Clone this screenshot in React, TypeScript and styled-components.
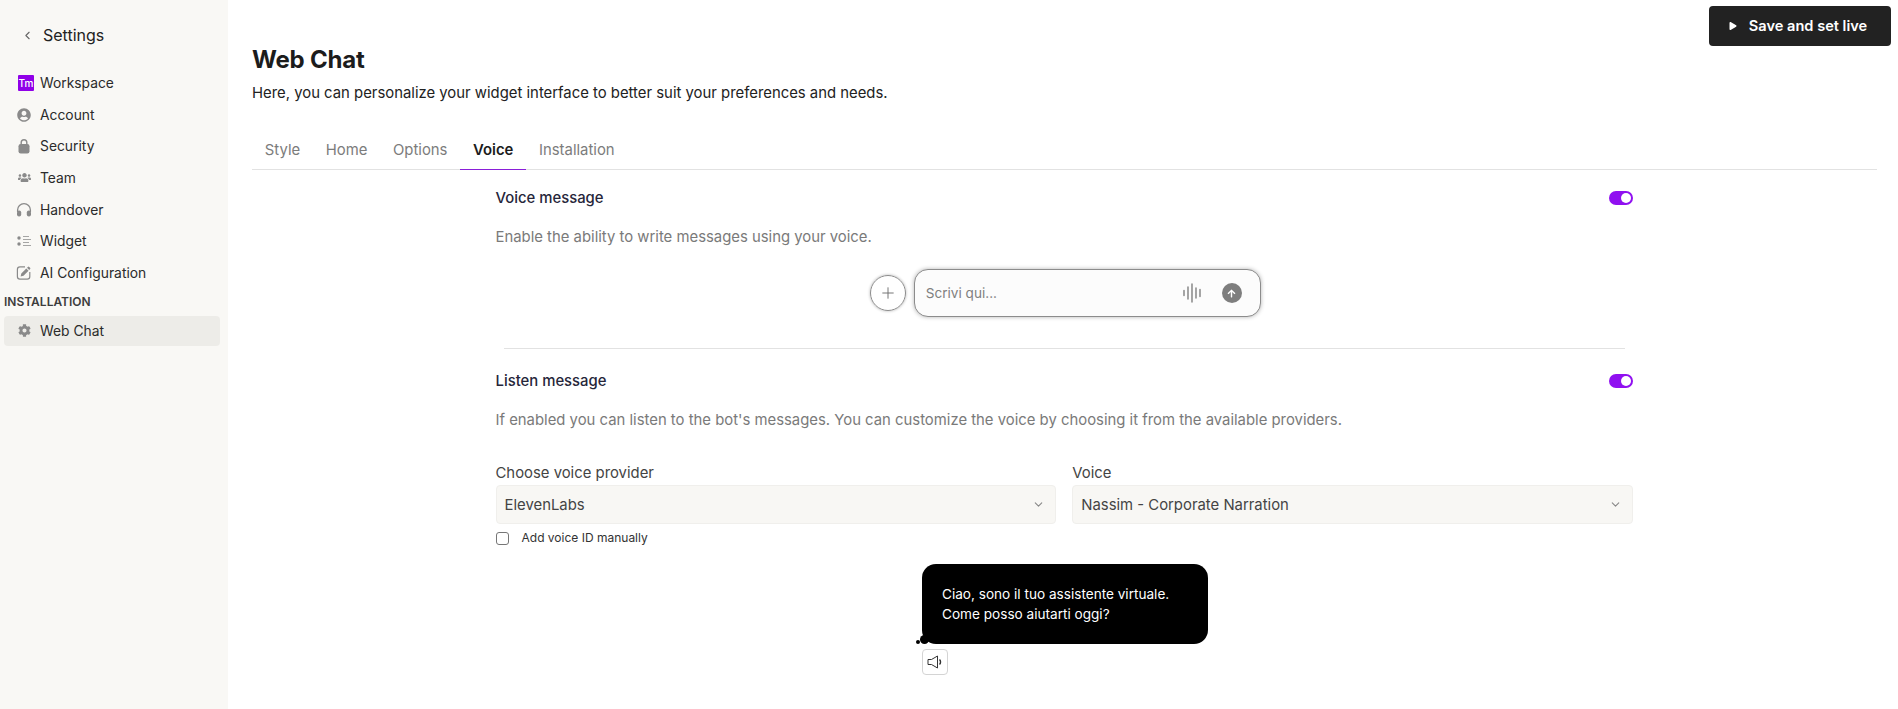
import React from "react"
import styled, { createGlobalStyle } from "styled-components"
import { ChevronDown, ChevronLeft, Plus } from "lucide-react"
import { FaUserCircle, FaCog, FaPlay, FaArrowUp, FaUsers } from "react-icons/fa"

const Global = createGlobalStyle`
  html, body {
    margin: 0;
    padding: 0;
    background: #fff;
    font-family: Inter, "Noto Sans", sans-serif;
    color: #1f1f1f;
  }
  * { box-sizing: border-box; }
`

const Page = styled.div`
  display: flex;
  height: 709px;
  overflow: hidden;
`

const Sidebar = styled.aside`
  width: 228px;
  flex: none;
  background: #f9f8f5;
  padding: 24px 8px 0 4px;
`

const Back = styled.div`
  display: flex;
  align-items: center;
  height: 22px;
  padding-left: 17px;
  gap: 9px;
  font-size: 16px;
  color: #222;
  margin-bottom: 21px;
  svg { color: #666; }
`

const NavItem = styled.div<{ $active?: boolean }>`
  display: flex;
  align-items: center;
  height: ${p => (p.$active ? "30px" : "31.7px")};
  padding-left: 11px;
  gap: 7px;
  font-size: 13.85px;
  color: #2b2b2b;
  border-radius: 4px;
  background: ${p => (p.$active ? "#edece8" : "transparent")};
`

const NavIcon = styled.span`
  width: 18px;
  height: 18px;
  display: flex;
  align-items: center;
  justify-content: center;
  color: #8a8a8a;
  flex: none;
`

const Logo = styled.span`
  width: 16px;
  height: 16px;
  margin-left: 3px;
  margin-right: -1px;
  background: #9000e8;
  color: #fff;
  font-size: 10px;
  font-weight: 500;
  line-height: 16px;
  text-align: center;
  border-radius: 1px;
  flex: none;
`

const SectionLabel = styled.div`
  font-size: 12px;
  font-weight: 600;
  color: #3d3d3d;
  line-height: 14px;
  margin: 6px 0 7px;
`

const Main = styled.main`
  flex: 1;
  min-width: 0;
  padding: 6px 7px 0 24px;
`

const TopBar = styled.div`
  display: flex;
  justify-content: flex-end;
  height: 39px;
`

const SaveButton = styled.button`
  width: 182px;
  height: 40px;
  padding: 0 4px 0 0;
  background: #222;
  color: #fff;
  border: 0;
  border-radius: 4px;
  font: 600 14.6px Inter, sans-serif;
  display: flex;
  align-items: center;
  justify-content: center;
  gap: 12px;
`

const Title = styled.h1`
  margin: 0;
  font-size: 24px;
  line-height: 30px;
  font-weight: 700;
  letter-spacing: -0.2px;
  color: #1c1c1c;
`

const Sub = styled.p`
  margin: 8px 0 0;
  font-size: 14.87px;
  line-height: 20px;
  color: #222;
`

const Tabs = styled.div`
  display: flex;
  margin-top: 28px;
  margin-right: 14px;
  height: 39px;
  border-bottom: 1px solid #e2e2e2;
`

const Tab = styled.div<{ $active?: boolean }>`
  padding: 0 12.8px;
  height: 39px;
  line-height: 38px;
  font-size: 14.87px;
  font-weight: ${p => (p.$active ? 600 : 400)};
  color: ${p => (p.$active ? "#1c1c1c" : "#7c7c7c")};
  border-bottom: 1px solid ${p => (p.$active ? "#8a1fd8" : "transparent")};
`

const Content = styled.div`
  width: 1137.5px;
  margin-left: 243.5px;
  padding-top: 14px;
`

const Row = styled.div`
  display: flex;
  justify-content: space-between;
  align-items: center;
  height: 28px;
  font-size: 14.87px;
  font-weight: 500;
  color: #26263a;
`

const Toggle = styled.span`
  width: 24px;
  height: 14px;
  background: #9010f0;
  border-radius: 7px;
  position: relative;
  &::after {
    content: "";
    position: absolute;
    right: 2px;
    top: 2px;
    width: 10px;
    height: 10px;
    border-radius: 50%;
    background: #fff;
  }
`

const Desc = styled.p`
  margin: 15px 0 0;
  font-size: 14.87px;
  line-height: 20px;
  color: #7a7a7a;
`

const Composer = styled.div`
  display: flex;
  justify-content: center;
  align-items: center;
  gap: 8px;
  margin-top: 22px;
  padding-left: 2px;
`

const PlusButton = styled.span`
  width: 36px;
  height: 36px;
  border-radius: 50%;
  border: 1px solid #8c8c8c;
  box-shadow: 0 0 3px rgba(0, 0, 0, 0.3);
  display: flex;
  align-items: center;
  justify-content: center;
  color: #6e6e6e;
`

const InputBox = styled.div`
  width: 347px;
  height: 48px;
  border: 1px solid #8c8c8c;
  border-radius: 14px;
  background: #fcfcfc;
  box-shadow: 0 0 4px rgba(0, 0, 0, 0.3);
  display: flex;
  align-items: center;
  padding: 0 18px 0 11px;
  font-size: 13.6px;
  color: #808080;
`

const Placeholder = styled.span`
  flex: 1;
`

const SendButton = styled.span`
  width: 20px;
  height: 20px;
  margin-left: 21px;
  border-radius: 50%;
  background: #7e7e7e;
  color: #fff;
  display: flex;
  align-items: center;
  justify-content: center;
`

const Divider = styled.hr`
  border: 0;
  border-top: 1px solid #e2e2e2;
  margin: 31px 8px 18px 8px;
`

const Fields = styled.div`
  display: grid;
  grid-template-columns: 1fr 1fr;
  gap: 16px;
  margin-top: 33px;
`

const FieldLabel = styled.div`
  font-size: 14.87px;
  line-height: 20px;
  color: #444;
  margin-bottom: 2px;
`

const Select = styled.div`
  height: 39px;
  border: 1px solid #f0efec;
  border-radius: 4px;
  background: #f8f7f4;
  display: flex;
  justify-content: space-between;
  align-items: center;
  padding: 0 10px 0 8px;
  font-size: 14.87px;
  color: #444;
  svg { color: #888; }
`

const CheckRow = styled.label`
  display: flex;
  align-items: center;
  gap: 13px;
  margin-top: 7px;
  font-size: 12px;
  line-height: 14px;
  color: #333;
`

const CheckBox = styled.span`
  width: 13px;
  height: 13px;
  border: 1px solid #767676;
  border-radius: 3px;
  background: #fff;
`

const Preview = styled.div`
  margin: 19px 0 0 426.5px;
  width: 286px;
`

const Bubble = styled.div`
  position: relative;
  height: 80px;
  padding: 20px 20px 0;
  background: #000;
  color: #fff;
  border-radius: 14px;
  font-size: 13.6px;
  line-height: 20px;
  &::before {
    content: "";
    position: absolute;
    left: -2px;
    bottom: 0;
    width: 9px;
    height: 9px;
    border-radius: 50%;
    background: #000;
  }
  &::after {
    content: "";
    position: absolute;
    left: -6px;
    bottom: 0;
    width: 4px;
    height: 4px;
    border-radius: 50%;
    background: #000;
  }
`

const SpeakerButton = styled.span`
  display: flex;
  align-items: center;
  justify-content: center;
  width: 26px;
  height: 26px;
  margin-top: 5px;
  border: 1px solid #d4d4d4;
  border-radius: 4px;
  color: #333;
`

const Wave = () => (
  <svg width="18" height="20" viewBox="0 0 18 20" fill="none" stroke="#808080" strokeWidth="1.4" strokeLinecap="round">
    <path d="M1 7.5v5M5 4v12M9 1v18M13 5v10M17 6.5v7" />
  </svg>
)

const Speaker = () => (
  <svg width="16" height="14" viewBox="0 0 16 14" fill="none" stroke="currentColor" strokeWidth="1" strokeLinejoin="round">
    <path d="M1 4.5h3.5L10.5 1v12L4.5 9.5H1z" />
    <path d="M12.5 4.5a3.5 3.5 0 0 1 0 5" strokeWidth="1.4" />
  </svg>
)

const LockIcon = () => (
  <svg width="14" height="16" viewBox="0 0 14 16" fill="currentColor">
    <path d="M3.5 6.5V4.5a3.5 3.5 0 0 1 7 0v2h-1.4v-2a2.1 2.1 0 0 0-4.2 0v2z" />
    <rect x="1.5" y="6" width="11" height="9.5" rx="2.2" />
  </svg>
)

const HeadsetIcon = () => (
  <svg width="16" height="15" viewBox="0 0 16 15" fill="currentColor">
    <path d="M1.6 10V8a6.4 6.4 0 0 1 12.8 0v2" fill="none" stroke="currentColor" strokeWidth="1.3" />
    <rect x="1" y="8.5" width="4.2" height="6" rx="2" />
    <rect x="10.8" y="8.5" width="4.2" height="6" rx="2" />
  </svg>
)

const WidgetIcon = () => (
  <svg width="15" height="12" viewBox="0 0 15 12" fill="currentColor">
    <circle cx="2" cy="3" r="1.7" />
    <circle cx="2" cy="9" r="1.7" />
    <path d="M6 1.5h6M6 4.5h8M6 7.5h6M6 10.5h8" stroke="currentColor" strokeWidth="1" opacity=".75" />
  </svg>
)

const EditIcon = () => (
  <svg width="16" height="16" viewBox="0 0 16 16">
    <path d="M9 1.8H4a2.6 2.6 0 0 0-2.6 2.6v7.2A2.6 2.6 0 0 0 4 14.2h7.2a2.6 2.6 0 0 0 2.6-2.6V7" fill="none" stroke="currentColor" strokeWidth="1.2" />
    <path d="M4.6 11.4l.7-2.9 5-5 2.2 2.2-5 5zM11 2.8l.9-.9a.9.9 0 0 1 1.3 0l.9.9a.9.9 0 0 1 0 1.3l-.9.9z" fill="currentColor" />
  </svg>
)

const navItems = [
  { label: "Account", icon: <FaUserCircle size={14} /> },
  { label: "Security", icon: <LockIcon /> },
  { label: "Team", icon: <FaUsers size={13} /> },
  { label: "Handover", icon: <HeadsetIcon /> },
  { label: "Widget", icon: <WidgetIcon /> },
  { label: "AI Configuration", icon: <EditIcon /> },
]

const App = () => {
  return (
    <Page>
      <Global />
      <Sidebar>
        <Back>
          <ChevronLeft size={13} />
          Settings
        </Back>
        <NavItem>
          <Logo>Tm</Logo>
          Workspace
        </NavItem>
        {navItems.map(item => (
          <NavItem key={item.label}>
            <NavIcon>{item.icon}</NavIcon>
            {item.label}
          </NavItem>
        ))}
        <SectionLabel>INSTALLATION</SectionLabel>
        <NavItem $active>
          <NavIcon>
            <FaCog size={13} />
          </NavIcon>
          Web Chat
        </NavItem>
      </Sidebar>
      <Main>
        <TopBar>
          <SaveButton>
            <FaPlay size={8} />
            Save and set live
          </SaveButton>
        </TopBar>
        <Title>Web Chat</Title>
        <Sub>Here, you can personalize your widget interface to better suit your preferences and needs.</Sub>
        <Tabs>
          <Tab>Style</Tab>
          <Tab>Home</Tab>
          <Tab>Options</Tab>
          <Tab $active>Voice</Tab>
          <Tab>Installation</Tab>
        </Tabs>
        <Content>
          <Row>
            Voice message
            <Toggle />
          </Row>
          <Desc>Enable the ability to write messages using your voice.</Desc>
          <Composer>
            <PlusButton>
              <Plus size={18} strokeWidth={1.25} />
            </PlusButton>
            <InputBox>
              <Placeholder>Scrivi qui...</Placeholder>
              <Wave />
              <SendButton>
                <FaArrowUp size={9} />
              </SendButton>
            </InputBox>
          </Composer>
          <Divider />
          <Row>
            Listen message
            <Toggle />
          </Row>
          <Desc>If enabled you can listen to the bot's messages. You can customize the voice by choosing it from the available providers.</Desc>
          <Fields>
            <div>
              <FieldLabel>Choose voice provider</FieldLabel>
              <Select>
                ElevenLabs
                <ChevronDown size={13} />
              </Select>
            </div>
            <div>
              <FieldLabel>Voice</FieldLabel>
              <Select>
                Nassim - Corporate Narration
                <ChevronDown size={13} />
              </Select>
            </div>
          </Fields>
          <CheckRow>
            <CheckBox />
            Add voice ID manually
          </CheckRow>
          <Preview>
            <Bubble>
              Ciao, sono il tuo assistente virtuale.
              <br />
              Come posso aiutarti oggi?
            </Bubble>
            <SpeakerButton>
              <Speaker />
            </SpeakerButton>
          </Preview>
        </Content>
      </Main>
    </Page>
  )
}

export default App
